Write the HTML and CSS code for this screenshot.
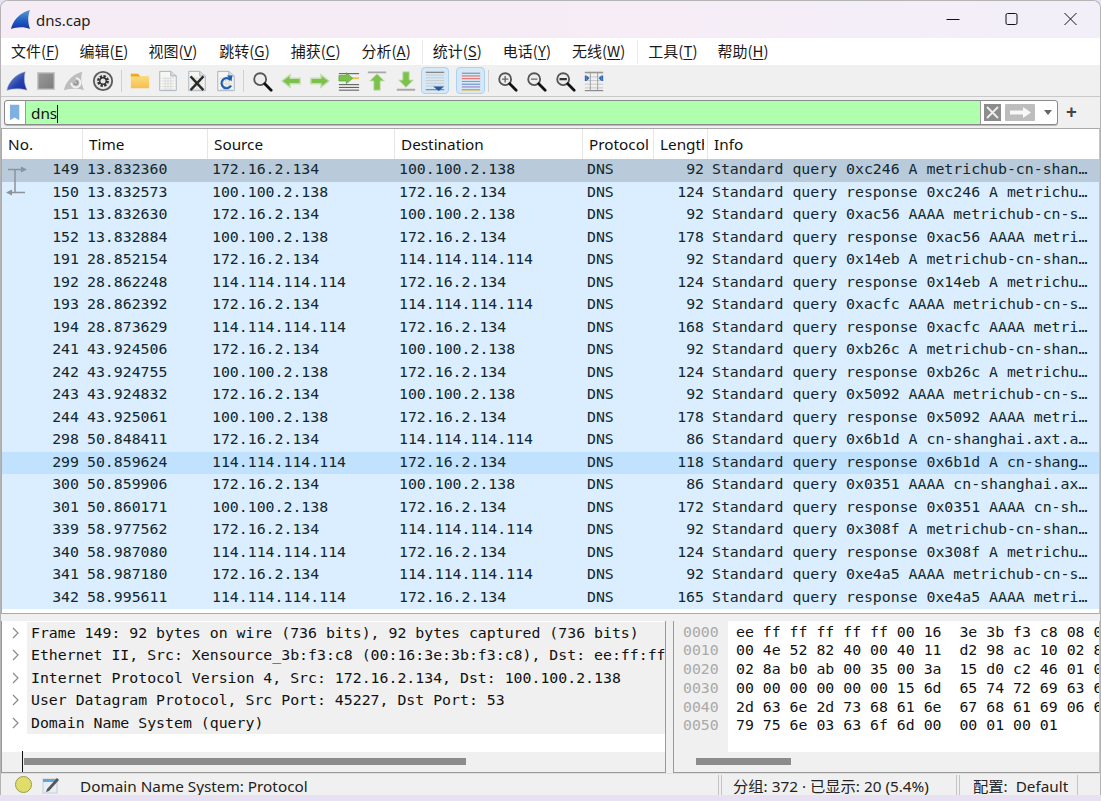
FILE: index.html
```html
<!DOCTYPE html>
<html lang="zh-CN">
<head>
<meta charset="utf-8">
<title>dns.cap</title>
<link rel="stylesheet" href="styles.css">
</head>
<body>
<svg class="defs" width="0" height="0" aria-hidden="true">
  <defs>
    <linearGradient id="finBlue" x1="0" y1="0" x2="0" y2="1"><stop offset="0" stop-color="#5a9ad8"/><stop offset=".55" stop-color="#1f5fc0"/><stop offset="1" stop-color="#1a2fa8"/></linearGradient>
    <linearGradient id="finTool" x1="0" y1="0" x2="1" y2="1"><stop offset="0" stop-color="#8aa4d0"/><stop offset=".6" stop-color="#2340b0"/><stop offset="1" stop-color="#1a2a98"/></linearGradient>
    <linearGradient id="folder" x1="0" y1="0" x2="0" y2="1"><stop offset="0" stop-color="#fde08a"/><stop offset="1" stop-color="#f6c04c"/></linearGradient>
    <linearGradient id="grey" x1="0" y1="0" x2="1" y2="1"><stop offset="0" stop-color="#9a9a9a"/><stop offset="1" stop-color="#7c7c7c"/></linearGradient>
    <g id="doc"><path d="M3 1.500h12l6 5v16H3z" fill="#f6f6f2" stroke="#a4aebc"/><path d="M15 1.500v5h6" fill="#d6dee8" stroke="#a4aebc"/><path d="M5 9h14M5 12h14M5 15h14M5 18h14M5 21h14M9 8v14M12 8v14M15 8v14" stroke="#d4d4d4" stroke-width=".8"/></g>
    <g id="lensbody"><circle cx="10" cy="10" r="6.500" fill="#eeeeee" stroke="#555" stroke-width="2"/><path d="M15 15l7 7" stroke="#111" stroke-width="3" stroke-linecap="round"/></g>
  </defs>
</svg>
<div class="window">
  <header class="titlebar">
    <svg class="logo" viewBox="0 0 22 22"><path d="M1 21C3 12 10 4 21 1c-3 7-2 14 0 20-7-3-14-2-20 0z" fill="url(#finBlue)"/></svg>
    <span class="title">dns.cap</span>
    <div class="controls">
      <svg class="ctl" viewBox="0 0 46 30"><path d="M17 15.500h13" stroke="#111" fill="none"/></svg>
      <svg class="ctl" viewBox="0 0 46 30"><rect x="17.500" y="9.500" width="11" height="11" rx="1.500" stroke="#111" fill="none"/></svg>
      <svg class="ctl" viewBox="0 0 46 30"><path d="M17 9l12 12M29 9L17 21" stroke="#111" fill="none"/></svg>
    </div>
  </header>
  <nav class="menubar">
    <span class="menu">文件(<u>F</u>)</span>
    <span class="menu">编辑(<u>E</u>)</span>
    <span class="menu wider">视图(<u>V</u>)</span>
    <span class="menu wide">跳转(<u>G</u>)</span>
    <span class="menu wide">捕获(<u>C</u>)</span>
    <span class="menu wide">分析(<u>A</u>)</span>
    <i class="menusep"></i>
    <span class="menu wide">统计(<u>S</u>)</span>
    <span class="menu wide">电话(<u>Y</u>)</span>
    <span class="menu wider">无线(<u>W</u>)</span>
    <i class="menusep"></i>
    <span class="menu">工具(<u>T</u>)</span>
    <span class="menu">帮助(<u>H</u>)</span>
  </nav>
  <div class="toolbar">
    <span class="tool"><svg viewBox="0 0 24 24"><path d="M1 22C3 13 10 5 21 2c-2 7-1 14 2 20-7-2-15-2-22 0z" fill="url(#finTool)" stroke="#9aa6c0" stroke-width=".6"/></svg></span>
    <span class="tool"><svg viewBox="0 0 24 24"><rect x="3" y="3" width="18" height="18" fill="url(#grey)" stroke="#c6c6c6" stroke-width="1.500"/></svg></span>
    <span class="tool"><svg viewBox="0 0 24 24"><path d="M1 22C3 13 10 5 21 2c-2 7-1 14 2 20-7-2-15-2-22 0z" fill="#bdbdbd"/><path d="M9 14a5 5 0 1 0 5-5" fill="none" stroke="#f2f2f2" stroke-width="2.200"/><path d="M12 14a2 2 0 1 0 2-2" fill="none" stroke="#8e8e8e" stroke-width="1.400"/></svg></span>
    <span class="tool"><svg viewBox="0 0 24 24"><circle cx="12" cy="12" r="10" fill="#e6e6e6" stroke="#5c5c5c" stroke-width="2"/><circle cx="12" cy="12" r="5" fill="none" stroke="#333" stroke-width="3" stroke-dasharray="2.500 1.400"/><circle cx="12" cy="12" r="3.500" fill="none" stroke="#333" stroke-width="1.500"/></svg></span>
    <i class="toolsep"></i>
    <span class="tool"><svg viewBox="0 0 24 24"><path d="M2 4h8l2 2.500h10V20H2z" fill="url(#folder)"/><path d="M2 4h8l2 3H2z" fill="#eda92c"/></svg></span>
    <span class="tool"><svg viewBox="0 0 24 24"><use href="#doc"/></svg></span>
    <span class="tool"><svg viewBox="0 0 24 24"><use href="#doc"/><path d="M5 7l14 15M19 7L5 22" stroke="#2b2b2b" stroke-width="2.600"/></svg></span>
    <span class="tool"><svg viewBox="0 0 24 24"><use href="#doc"/><path d="M17 11a5.500 5.500 0 1 0 .5 6" fill="none" stroke="#1f5fb4" stroke-width="2.400"/><path d="M13 6l6 0-1 6.500z" fill="#1f5fb4"/></svg></span>
    <i class="toolsep"></i>
    <span class="tool"><svg viewBox="0 0 24 24"><use href="#lensbody"/></svg></span>
    <span class="tool"><svg viewBox="0 0 24 24"><path d="M2 12l9-7v4h11v6H11v4z" fill="#7cc24a" stroke="#c7dcb8" stroke-width="1.500"/></svg></span>
    <span class="tool"><svg viewBox="0 0 24 24"><path d="M22 12l-9-7v4H2v6h11v4z" fill="#7cc24a" stroke="#c7dcb8" stroke-width="1.500"/></svg></span>
    <span class="tool"><svg viewBox="0 0 24 24"><path d="M1 4h22M1 16h22M1 19h22M1 22h22" stroke="#444"/><path d="M14 8h9v2h-9z" fill="#e8c84a"/><path d="M16 9l-7-6v3H1v6h8v3z" fill="#7cc24a" stroke="#4b8f2a" stroke-width=".6"/></svg></span>
    <span class="tool"><svg viewBox="0 0 24 24"><path d="M2 2.500h20" stroke="#a8a8a8" stroke-width="2"/><path d="M12 4l8 8h-4.500v10h-7V12H4z" fill="#7cc24a" stroke="#c7dcb8"/></svg></span>
    <span class="tool"><svg viewBox="0 0 24 24"><path d="M2 21.500h20" stroke="#a8a8a8" stroke-width="2"/><path d="M12 19l8-8h-4.500V2h-7v9H4z" fill="#7cc24a" stroke="#c7dcb8"/></svg></span>
    <span class="tool on"><svg viewBox="0 0 24 24"><path d="M2 2.500h20M2 5.500h20M2 8.500h20M2 11.500h20M2 14.500h20M2 17.500h20" stroke="#c8c8c8"/><path d="M2 2.500h20" stroke="#666"/><path d="M2 21.500h20" stroke="#666"/><path d="M10 18h12l-6 5z" fill="#27579f"/></svg></span>
    <i class="toolsep wide"></i>
    <span class="tool on"><svg viewBox="0 0 24 24"><path d="M2 3.500h20" stroke="#777"/><path d="M2 6.500h20" stroke="#e2574c"/><path d="M2 9.500h20" stroke="#e2574c"/><path d="M2 12.500h20" stroke="#6da55a"/><path d="M2 15.500h20" stroke="#4d7fc9"/><path d="M2 18.500h20" stroke="#9a63b8"/><path d="M2 21.500h20" stroke="#d9a924" stroke-width="1.500"/></svg></span>
    <i class="toolsep"></i>
    <span class="tool"><svg viewBox="0 0 24 24"><use href="#lensbody"/><path d="M6.500 10h7M10 6.500v7" stroke="#666" stroke-width="1.500"/></svg></span>
    <span class="tool"><svg viewBox="0 0 24 24"><use href="#lensbody"/><path d="M6.500 10h7" stroke="#666" stroke-width="1.500"/></svg></span>
    <span class="tool"><svg viewBox="0 0 24 24"><use href="#lensbody"/><path d="M6 10h8" stroke="#333" stroke-width="2.400"/></svg></span>
    <span class="tool"><svg viewBox="0 0 24 24"><path d="M2 3.500h20M2 7.500h20M2 11.500h20M2 15.500h20M2 19.500h20M2 22.500h20" stroke="#c4c4c4"/><path d="M2 2.500h20M2 22.500h20" stroke="#777"/><path d="M8 2v21M16 2v21" stroke="#9a9a9a"/><path d="M2 6h2v6H2zM20 6h2v6h-2z" fill="#2d66b5"/><path d="M4 6l3 3-3 3zM20 6l-3 3 3 3z" fill="#2d66b5"/></svg></span>
  </div>
  <div class="filterbar">
    <div class="filter">
      <span class="bookmark"><svg viewBox="0 0 14 22"><path d="M0 0h13v22l-6.500-4L0 22z" fill="#7fb0e4"/></svg></span>
      <span class="filtertext">dns<i class="caret"></i></span>
      <span class="fbtn clear"><svg viewBox="0 0 17 17"><rect width="17" height="17" fill="#8c8c8c"/><path d="M3 3l11 11M14 3L3 14" stroke="#eee" stroke-width="1.800"/></svg></span>
      <span class="fbtn apply"><svg viewBox="0 0 30 17"><rect width="30" height="17" rx="1" fill="#bdbdbd"/><path d="M5 6.500h13V3l8 5.500-8 5.500v-3.500H5z" fill="#f7f7f7"/></svg></span>
      <span class="drop"></span>
    </div>
    <span class="plus">+</span>
  </div>
  <section class="packets">
    <div class="row head">
      <span class="h">No.</span><span class="h">Time</span><span class="h">Source</span><span class="h">Destination</span><span class="h">Protocol</span><span class="h"><span class="clip">Length</span></span><span class="h">Info</span>
    </div>
    <div class="row sel"><span class="num">149</span><span>13.832360</span><span>172.16.2.134</span><span>100.100.2.138</span><span>DNS</span><span class="num">92</span><span>Standard query 0xc246 A metrichub-cn-shan…</span></div>
    <div class="row"><span class="num">150</span><span>13.832573</span><span>100.100.2.138</span><span>172.16.2.134</span><span>DNS</span><span class="num">124</span><span>Standard query response 0xc246 A metrichu…</span></div>
    <div class="row"><span class="num">151</span><span>13.832630</span><span>172.16.2.134</span><span>100.100.2.138</span><span>DNS</span><span class="num">92</span><span>Standard query 0xac56 AAAA metrichub-cn-s…</span></div>
    <div class="row"><span class="num">152</span><span>13.832884</span><span>100.100.2.138</span><span>172.16.2.134</span><span>DNS</span><span class="num">178</span><span>Standard query response 0xac56 AAAA metri…</span></div>
    <div class="row"><span class="num">191</span><span>28.852154</span><span>172.16.2.134</span><span>114.114.114.114</span><span>DNS</span><span class="num">92</span><span>Standard query 0x14eb A metrichub-cn-shan…</span></div>
    <div class="row"><span class="num">192</span><span>28.862248</span><span>114.114.114.114</span><span>172.16.2.134</span><span>DNS</span><span class="num">124</span><span>Standard query response 0x14eb A metrichu…</span></div>
    <div class="row"><span class="num">193</span><span>28.862392</span><span>172.16.2.134</span><span>114.114.114.114</span><span>DNS</span><span class="num">92</span><span>Standard query 0xacfc AAAA metrichub-cn-s…</span></div>
    <div class="row"><span class="num">194</span><span>28.873629</span><span>114.114.114.114</span><span>172.16.2.134</span><span>DNS</span><span class="num">168</span><span>Standard query response 0xacfc AAAA metri…</span></div>
    <div class="row"><span class="num">241</span><span>43.924506</span><span>172.16.2.134</span><span>100.100.2.138</span><span>DNS</span><span class="num">92</span><span>Standard query 0xb26c A metrichub-cn-shan…</span></div>
    <div class="row"><span class="num">242</span><span>43.924755</span><span>100.100.2.138</span><span>172.16.2.134</span><span>DNS</span><span class="num">124</span><span>Standard query response 0xb26c A metrichu…</span></div>
    <div class="row"><span class="num">243</span><span>43.924832</span><span>172.16.2.134</span><span>100.100.2.138</span><span>DNS</span><span class="num">92</span><span>Standard query 0x5092 AAAA metrichub-cn-s…</span></div>
    <div class="row"><span class="num">244</span><span>43.925061</span><span>100.100.2.138</span><span>172.16.2.134</span><span>DNS</span><span class="num">178</span><span>Standard query response 0x5092 AAAA metri…</span></div>
    <div class="row"><span class="num">298</span><span>50.848411</span><span>172.16.2.134</span><span>114.114.114.114</span><span>DNS</span><span class="num">86</span><span>Standard query 0x6b1d A cn-shanghai.axt.a…</span></div>
    <div class="row hover"><span class="num">299</span><span>50.859624</span><span>114.114.114.114</span><span>172.16.2.134</span><span>DNS</span><span class="num">118</span><span>Standard query response 0x6b1d A cn-shang…</span></div>
    <div class="row"><span class="num">300</span><span>50.859906</span><span>172.16.2.134</span><span>100.100.2.138</span><span>DNS</span><span class="num">86</span><span>Standard query 0x0351 AAAA cn-shanghai.ax…</span></div>
    <div class="row"><span class="num">301</span><span>50.860171</span><span>100.100.2.138</span><span>172.16.2.134</span><span>DNS</span><span class="num">172</span><span>Standard query response 0x0351 AAAA cn-sh…</span></div>
    <div class="row"><span class="num">339</span><span>58.977562</span><span>172.16.2.134</span><span>114.114.114.114</span><span>DNS</span><span class="num">92</span><span>Standard query 0x308f A metrichub-cn-shan…</span></div>
    <div class="row"><span class="num">340</span><span>58.987080</span><span>114.114.114.114</span><span>172.16.2.134</span><span>DNS</span><span class="num">124</span><span>Standard query response 0x308f A metrichu…</span></div>
    <div class="row"><span class="num">341</span><span>58.987180</span><span>172.16.2.134</span><span>114.114.114.114</span><span>DNS</span><span class="num">92</span><span>Standard query 0xe4a5 AAAA metrichub-cn-s…</span></div>
    <div class="row"><span class="num">342</span><span>58.995611</span><span>114.114.114.114</span><span>172.16.2.134</span><span>DNS</span><span class="num">165</span><span>Standard query response 0xe4a5 AAAA metri…</span></div>
    <svg class="related" viewBox="0 0 22 40"><path d="M10 7v23" stroke="#8c9299" stroke-width="1.500" fill="none"/><path d="M3 6.500h14M4 29.500h16" stroke="#8c9299" stroke-width="1.500" fill="none"/><path d="M22 6.500l-6-3v6zM1 29.500l6-3v6z" fill="#8c9299"/></svg>
  </section>
  <div class="lower">
    <section class="details">
      <div class="dscroll">
        <div class="tree">
          <div class="node"><svg class="chev" viewBox="0 0 8 12"><path d="M1 1l5 5-5 5" fill="none" stroke="#8a8a8a" stroke-width="1.200"/></svg><span class="nodetext">Frame 149: 92 bytes on wire (736 bits), 92 bytes captured (736 bits)</span></div>
          <div class="node"><svg class="chev" viewBox="0 0 8 12"><path d="M1 1l5 5-5 5" fill="none" stroke="#8a8a8a" stroke-width="1.200"/></svg><span class="nodetext">Ethernet II, Src: Xensource_3b:f3:c8 (00:16:3e:3b:f3:c8), Dst: ee:ff:ff:ff:ff:ff (ee:ff:ff:ff:ff:ff)</span></div>
          <div class="node"><svg class="chev" viewBox="0 0 8 12"><path d="M1 1l5 5-5 5" fill="none" stroke="#8a8a8a" stroke-width="1.200"/></svg><span class="nodetext">Internet Protocol Version 4, Src: 172.16.2.134, Dst: 100.100.2.138</span></div>
          <div class="node"><svg class="chev" viewBox="0 0 8 12"><path d="M1 1l5 5-5 5" fill="none" stroke="#8a8a8a" stroke-width="1.200"/></svg><span class="nodetext">User Datagram Protocol, Src Port: 45227, Dst Port: 53</span></div>
          <div class="node"><svg class="chev" viewBox="0 0 8 12"><path d="M1 1l5 5-5 5" fill="none" stroke="#8a8a8a" stroke-width="1.200"/></svg><span class="nodetext">Domain Name System (query)</span></div>
        </div>
      </div>
      <div class="hbar left"><i class="tick"></i><i class="thumb"></i></div>
    </section>
    <section class="bytes">
      <div class="hex">
        <div class="offsets"><div>0000</div><div>0010</div><div>0020</div><div>0030</div><div>0040</div><div>0050</div></div>
        <div class="dump"><div>ee ff ff ff ff ff 00 16  3e 3b f3 c8 08 00 45 00</div><div>00 4e 52 82 40 00 40 11  d2 98 ac 10 02 86 64 64</div><div>02 8a b0 ab 00 35 00 3a  15 d0 c2 46 01 00 00 01</div><div>00 00 00 00 00 00 15 6d  65 74 72 69 63 68 75 62</div><div>2d 63 6e 2d 73 68 61 6e  67 68 61 69 06 61 6c 69</div><div>79 75 6e 03 63 6f 6d 00  00 01 00 01</div></div>
      </div>
      <div class="hbar right"><i class="thumb"></i></div>
    </section>
  </div>
  <footer class="status">
    <i class="led"></i>
    <svg class="edit" viewBox="0 0 18 18"><rect x="1" y="3" width="14" height="14" fill="#e8eef6" stroke="#c4ccd6"/><path d="M1 3h14v3H1z" fill="#5fa6dc"/><path d="M5 13L15 2l2 2L7 15l-3 1z" fill="#555"/></svg>
    <span class="stmsg">Domain Name System: Protocol</span>
    <i class="stsep"></i>
    <span class="stcount">分组: 372 · 已显示: 20 (5.4%)</span>
    <i class="stsep"></i>
    <span class="stprofile">配置:&nbsp; Default</span>
    <i class="stsep last"></i>
  </footer>
</div>
</body>
</html>
```
FILE: styles.css
```css
* { box-sizing: border-box; }
html, body { margin: 0; padding: 0; height: 100%; overflow: hidden; }
body { background: #e8e0f3; font-family: "Noto Sans", "Noto Sans CJK SC", sans-serif; color: #111; }
.defs { display: block; height: 0; }
.window { width: 1101px; height: 795px; background: #f0f0f0; display: flex; flex-direction: column; border-radius: 8px 8px 0 0; border-left: 1px solid #b4b4b4; border-top: 1px solid #b4b4b4; border-right: 1px solid #b4b4b4; overflow: hidden; }

.titlebar { height: 37px; display: flex; align-items: center; background: linear-gradient(90deg, #f6ecf6 0%, #f6ecf6 50%, #f2eff8 100%); flex: none; }
.logo { width: 21px; height: 21px; margin-left: 9px; margin-right: 5px; }
.title { font-size: 15px; color: #222; }
.controls { margin-left: auto; display: flex; margin-right: 0; }
.ctl { width: 59px; height: 30px; display: block; margin-bottom: 1px; }

.menubar { height: 27px; background: #fff; display: flex; align-items: center; padding-left: 0; flex: none; font-family: "Noto Sans CJK SC", "Noto Sans", sans-serif; font-size: 15px; color: #1a1a1a; }
.menu { padding: 0 10px 1px; white-space: nowrap; line-height: 26px; }
.menu.wide { padding-right: 11px; }
.menu.wider { padding-right: 12px; }
.menu u { text-underline-offset: 2px; }
.menusep { width: 1px; height: 24px; background: #eaeaea; }

.toolbar { height: 32px; background: #f0f0f0; display: flex; align-items: center; padding-left: 1.500px; border-bottom: 1px solid #c8c8c8; flex: none; }
.tool { width: 28.8px; height: 27px; display: flex; align-items: center; justify-content: center; flex: none; border: 1px solid transparent; border-radius: 4px; }
.tool svg { width: 22px; height: 22px; display: block; }
.tool.on { background: #d5e8f8; border-color: #a9d3f5; }
.toolsep { width: 7.500px; height: 22px; flex: none; position: relative; }
.toolsep::after { content: ""; position: absolute; left: 3px; top: 0; bottom: 0; width: 1px; background: #d0d0d0; }
.toolsep.wide { width: 7px; }
.toolsep.wide::after { display: none; }

.filterbar { height: 31px; display: flex; align-items: center; padding: 0 0 0 3px; background: #f0f0f0; flex: none; }
.filter { width: 1054px; height: 25px; display: flex; align-items: center; border: 1px solid #8a8a8a; border-radius: 3px; background: #fff; box-shadow: 0 1px 0 #bbb; }
.bookmark { width: 21px; height: 23px; display: flex; align-items: center; justify-content: center; flex: none; border-right: 1px solid #9a9a9a; }
.bookmark svg { width: 10px; height: 17px; display: block; }
.filtertext { width: 955px; height: 23px; flex: none; background: #afffaf; border-right: 1px solid #9a9a9a; padding-left: 5px; font-size: 15.3px; line-height: 24px; color: #111; }
.caret { display: inline-block; width: 1px; height: 18px; background: #111; vertical-align: -4px; margin-left: 0; }
.fbtn { display: flex; flex: none; }
.clear { margin-left: 3px; }
.clear svg { width: 17px; height: 17px; display: block; }
.apply { margin-left: 4px; }
.apply svg { width: 30px; height: 17px; display: block; }
.drop { width: 0; height: 0; border-left: 4.500px solid transparent; border-right: 4.500px solid transparent; border-top: 5px solid #666; margin-left: 9px; }
.plus { font-size: 19px; font-weight: 700; color: #444; margin-left: 8px; line-height: 23px; }

.packets { height: 486px; flex: none; background: #fff; border: 1px solid #a9a9a9; border-right-color: #c4c4c4; margin: 0; font-family: "DejaVu Sans Mono", monospace; font-size: 14.85px; position: relative; }
.row { display: grid; grid-template-columns: 81px 125px 187px 188px 71px 54px 1fr; height: 22.5px; line-height: 20.500px; background: #daeeff; color: #12272e; white-space: pre; }
.row > span { padding-left: 4px; overflow: hidden; }
.row > .num { text-align: right; padding: 0 4px 0 0; }
.row.head { height: 30px; background: #fff; line-height: 30px; font-family: "Noto Sans", sans-serif; font-size: 15.3px; color: #111; }
.row.head > .h { padding-left: 6px; border-right: 1px solid #e6e6e6; overflow: hidden; }
.row.head > .h:last-child { border-right: 0; }
.clip { display: block; overflow: hidden; margin-right: 3px; }
.row.sel { background: #b9cbda; }
.row.hover { background: #c0e2ff; }
.related { position: absolute; left: 3px; top: 34px; width: 22px; height: 40px; }

.lower { height: 159px; flex: none; display: grid; grid-template-columns: 665px 1fr; column-gap: 7px; padding-top: 7px; background: #f0f0f0; }
.details, .bytes { display: flex; flex-direction: column; background: #fff; border-right: 1px solid #9a9a9a; border-bottom: 1px solid #9a9a9a; overflow: hidden; font-family: "DejaVu Sans Mono", monospace; font-size: 14.85px; color: #111; }
.details { border-left: 1px solid #9a9a9a; }
.bytes { border-left: 1px solid #9a9a9a; border-right-color: #c4c4c4; }
.dscroll { flex: 1; overflow: hidden; }
.tree { padding-top: .5px; }
.node { height: 22.5px; line-height: 22px; display: flex; align-items: center; white-space: pre; }
.chev { width: 8px; height: 12px; flex: none; margin: 0 7px 0 10px; }
.node .nodetext { flex: 1; background: #f0f0f0; padding-left: 4px; height: 22.5px; overflow: hidden; min-width: 0; }
.hbar { height: 20px; flex: none; background: #f0f0f0; position: relative; }
.thumb { position: absolute; top: 6px; height: 7px; background: #8c8c8c; }
.left .thumb { left: 22px; width: 442px; }
.tick { position: absolute; left: 20px; top: -1px; bottom: 0; width: 1px; background: #111; }
.right .thumb { left: 22px; width: 95px; }
.hex { flex: 1; display: flex; overflow: hidden; white-space: pre; line-height: 18.8px; }
.offsets { width: 54px; background: #f0f0f0; color: #aaa; padding: 1.500px 0 0 9px; flex: none; }
.dump { padding: 1.500px 0 0 8px; }

.status { height: 22px; flex: none; display: flex; align-items: center; background: #f0f0f0; font-size: 15.3px; color: #222; white-space: nowrap; overflow: hidden; border-top: 1px solid #e0e0e0; margin-top: 0; }
.led { width: 17px; height: 17px; border-radius: 50%; background: #e0dd6a; border: 1px solid #9a9a50; margin-left: 14px; flex: none; }
.edit { width: 18px; height: 18px; margin-left: 10px; flex: none; }
.stmsg { margin-left: 20px; width: 638px; flex: none; font-family: "Noto Sans", sans-serif; line-height: 22px; padding-top: 2px; }
.stsep { width: 4px; height: 20px; border-left: 1px solid #c4c4c4; border-right: 1px solid #c4c4c4; flex: none; }
.stcount { margin-left: 11px; width: 223px; flex: none; font-family: "Noto Sans", "Noto Sans CJK SC", sans-serif; line-height: 22px; padding-top: 2px; }
.stprofile { margin-left: 13px; width: 104px; flex: none; font-family: "Noto Sans", "Noto Sans CJK SC", sans-serif; line-height: 22px; padding-top: 2px; }
.stsep.last { border-right: 0; }
```
